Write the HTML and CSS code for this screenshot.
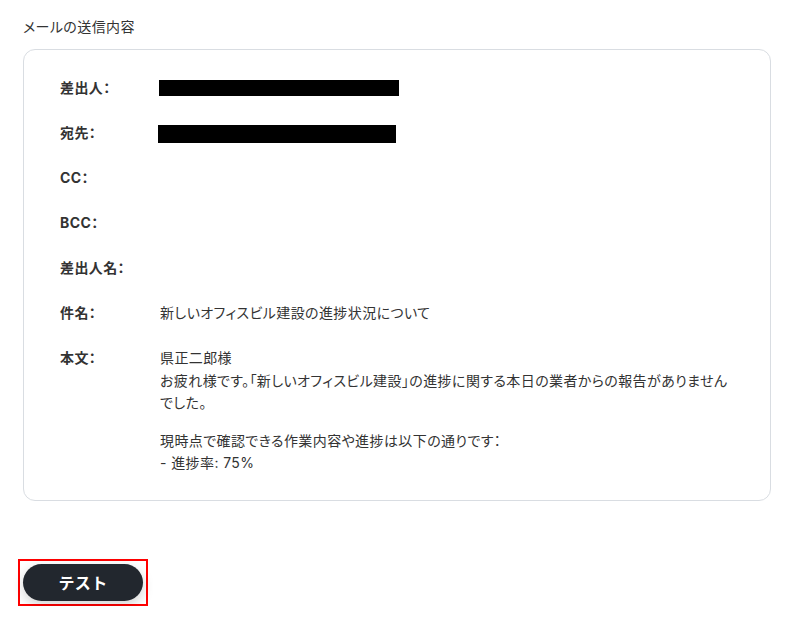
FILE: index.html
```html
<!DOCTYPE html>
<html lang="ja">
<head>
<meta charset="utf-8">
<link rel="stylesheet" href="styles.css">
</head>
<body>
<div class="page">
  <div class="title">メールの送信内容</div>
  <div class="card">
    <div class="row">
      <div class="label">差出人：</div>
      <div class="value"><span class="redact r1"></span></div>
    </div>
    <div class="row">
      <div class="label">宛先：</div>
      <div class="value"><span class="redact r2"></span></div>
    </div>
    <div class="row">
      <div class="label">CC：</div>
      <div class="value"></div>
    </div>
    <div class="row">
      <div class="label">BCC：</div>
      <div class="value"></div>
    </div>
    <div class="row">
      <div class="label">差出人名：</div>
      <div class="value"></div>
    </div>
    <div class="row">
      <div class="label">件名：</div>
      <div class="value">新しいオフィスビル建設の進捗状況について</div>
    </div>
    <div class="row">
      <div class="label">本文：</div>
      <div class="value body">
        <div>県正二郎様</div>
        <div>お疲れ様です。「新しいオフィスビル建設」の進捗に関する本日の業者からの報告がありません</div>
        <div>でした。</div>
        <div class="spacer"></div>
        <div>現時点で確認できる作業内容や進捗は以下の通りです：</div>
        <div>- 進捗率: 75%</div>
      </div>
    </div>
  </div>
  <div class="actions">
    <div class="focus-ring">
      <button class="btn">テスト</button>
    </div>
  </div>
</div>
</body>
</html>
```
FILE: styles.css
```css
html, body {
  margin: 0;
  padding: 0;
  background: #ffffff;
}
body {
  font-family: Inter, "Noto Sans CJK JP", "Noto Sans", sans-serif;
  color: #333333;
  font-size: 14px;
  font-feature-settings: "palt";
  letter-spacing: 0.4px;
}
.page {
  padding: 17px 31px 0 23px;
}
.title {
  font-size: 14px;
  line-height: 20px;
  color: #333;
  margin-bottom: 12px;
}
.card {
  border: 1px solid #d9dde2;
  border-radius: 12px;
  padding: 27px 36px 25px 36px;
  display: flex;
  flex-direction: column;
  gap: 23px;
}
.row {
  display: flex;
  line-height: 22px;
}
.label {
  width: 100px;
  flex: none;
  font-weight: 700;
  font-size: 14px;
  color: #333;
}
.value {
  flex: 1;
  font-size: 14px;
  color: #333;
  min-height: 22px;
  white-space: nowrap;
}
.body {
  line-height: 22.5px;
}
.spacer {
  height: 15px;
}
.redact {
  display: block;
  background: #000;
}
.r1 {
  width: 240px;
  height: 16px;
  margin-top: 3px;
  margin-left: -1px;
}
.r2 {
  width: 238px;
  height: 18px;
  margin-top: 3px;
  margin-left: -2px;
}
.actions {
  margin-top: 58px;
  margin-left: -5px;
  display: flex;
}
.focus-ring {
  border: 2px solid #ff0000;
  padding: 3px;
  display: flex;
}
.btn {
  width: 120px;
  height: 37px;
  border: none;
  border-radius: 19px;
  background: #22272e;
  color: #ffffff;
  font-family: Inter, "Noto Sans CJK JP", sans-serif;
  font-size: 16px;
  font-weight: 700;
  letter-spacing: 0.4px;
  box-shadow: 0 4px 12px rgba(0, 0, 0, 0.18);
  padding: 0;
}
```
